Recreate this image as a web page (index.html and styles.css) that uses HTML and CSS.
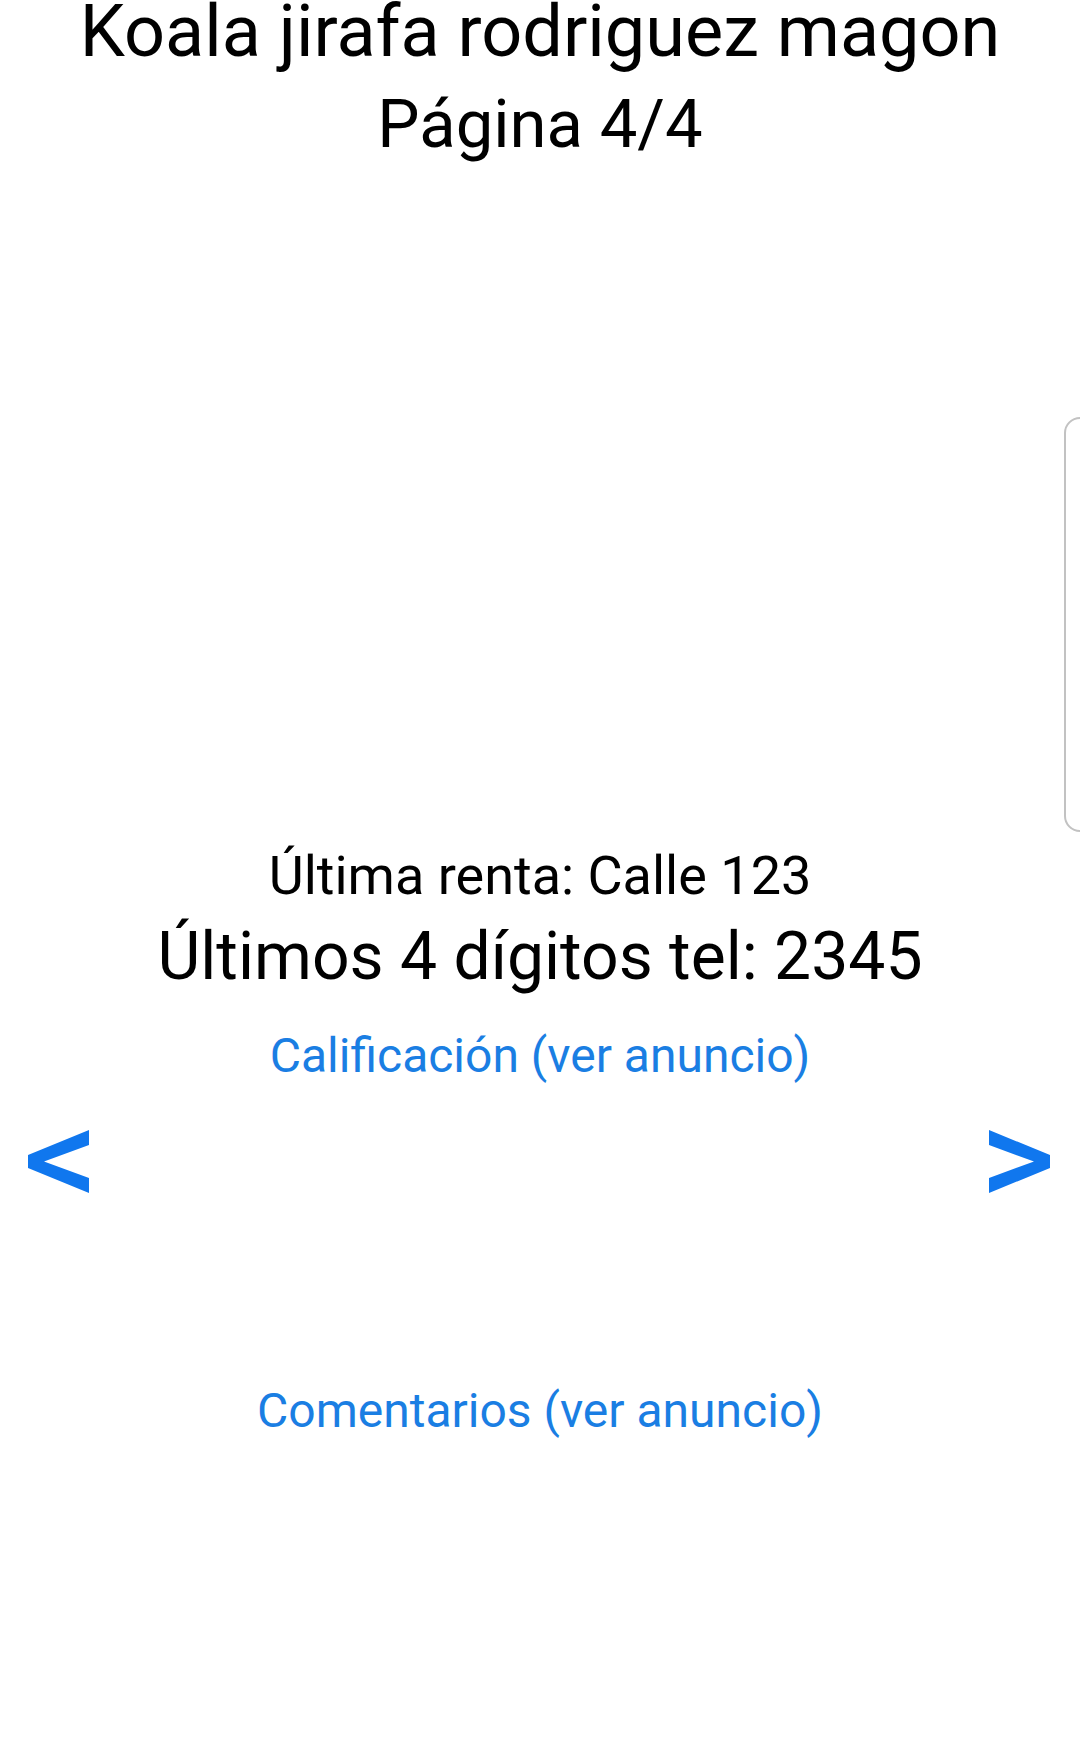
FILE: index.html
```html
<!DOCTYPE html>
<html lang="es">
<head>
    <meta charset="UTF-8">
    <meta name="viewport" content="width=device-width, initial-scale=1.0">
    <title>Koala jirafa rodriguez magon</title>
    <link rel="stylesheet" href="styles.css">
</head>
<body>

<div class="page">
    <!-- Encabezado -->
    <div class="header">
        <h1 class="title">Koala jirafa rodriguez magon</h1>
        <div class="page-count">Página 4/4</div>
    </div>

    <!-- Espacio de la foto -->
    <div class="photo"></div>

    <!-- Datos del anuncio -->
    <div class="info">
        <p class="last-rent">Última renta: Calle 123</p>
        <p class="phone">Últimos 4 dígitos tel: 2345</p>
        <a class="link rating" href="#">Calificación (ver anuncio)</a>
    </div>

    <div class="nav">
        <a class="nav-btn" href="#" aria-label="Anterior">
            <svg width="62" height="63" viewBox="0 0 62 63">
                <polygon points="61,0 61,15 16,31.5 61,48 61,63 0,38 0,25"/>
            </svg>
        </a>
        <a class="nav-btn" href="#" aria-label="Siguiente">
            <svg width="62" height="63" viewBox="0 0 62 63">
                <polygon points="1,0 1,15 46,31.5 1,48 1,63 62,38 62,25"/>
            </svg>
        </a>
    </div>

    <a class="link comments" href="#">Comentarios (ver anuncio)</a>
</div>

<!-- Asa del panel lateral -->
<div class="edge-handle"></div>

</body>
</html>
```

FILE: styles.css
```css
body {
    font-family: Roboto, "Noto Sans", Arial, sans-serif;
    margin: 0;
    padding: 0;
    background-color: #ffffff;
    color: #000;
}
.page {
    display: flex;
    flex-direction: column;
    align-items: center;
    text-align: center;
}
.header {
    display: flex;
    flex-direction: column;
    align-items: center;
}
.title {
    margin: 0;
    font-size: 72px;
    font-weight: normal;
    line-height: 64px;
}
.page-count {
    margin-top: 20px;
    font-size: 67px;
    line-height: 80px;
}
.photo {
    width: 100%;
    height: 680px;
}
.info {
    display: flex;
    flex-direction: column;
    align-items: center;
}
.info p {
    margin: 0;
    line-height: 1.2;
}
.last-rent {
    font-size: 54px;
}
.phone {
    margin-top: 8px !important;
    font-size: 66px;
}
.link {
    color: #1a7ee3;
    text-decoration: none;
    font-size: 48px;
    line-height: 1.2;
}
.rating {
    margin-top: 31px;
}
.nav {
    width: 100%;
    box-sizing: border-box;
    display: flex;
    justify-content: space-between;
    padding: 0 30px 0 28px;
    margin-top: 45px;
}
.nav-btn {
    display: block;
    line-height: 0;
}
.nav-btn svg {
    fill: #1077ee;
}
.comments {
    margin-top: 189px;
}
.edge-handle {
    position: absolute;
    top: 417px;
    right: -20px;
    width: 32px;
    height: 411px;
    border: 2px solid #c2c2c2;
    border-radius: 16px;
}
```
